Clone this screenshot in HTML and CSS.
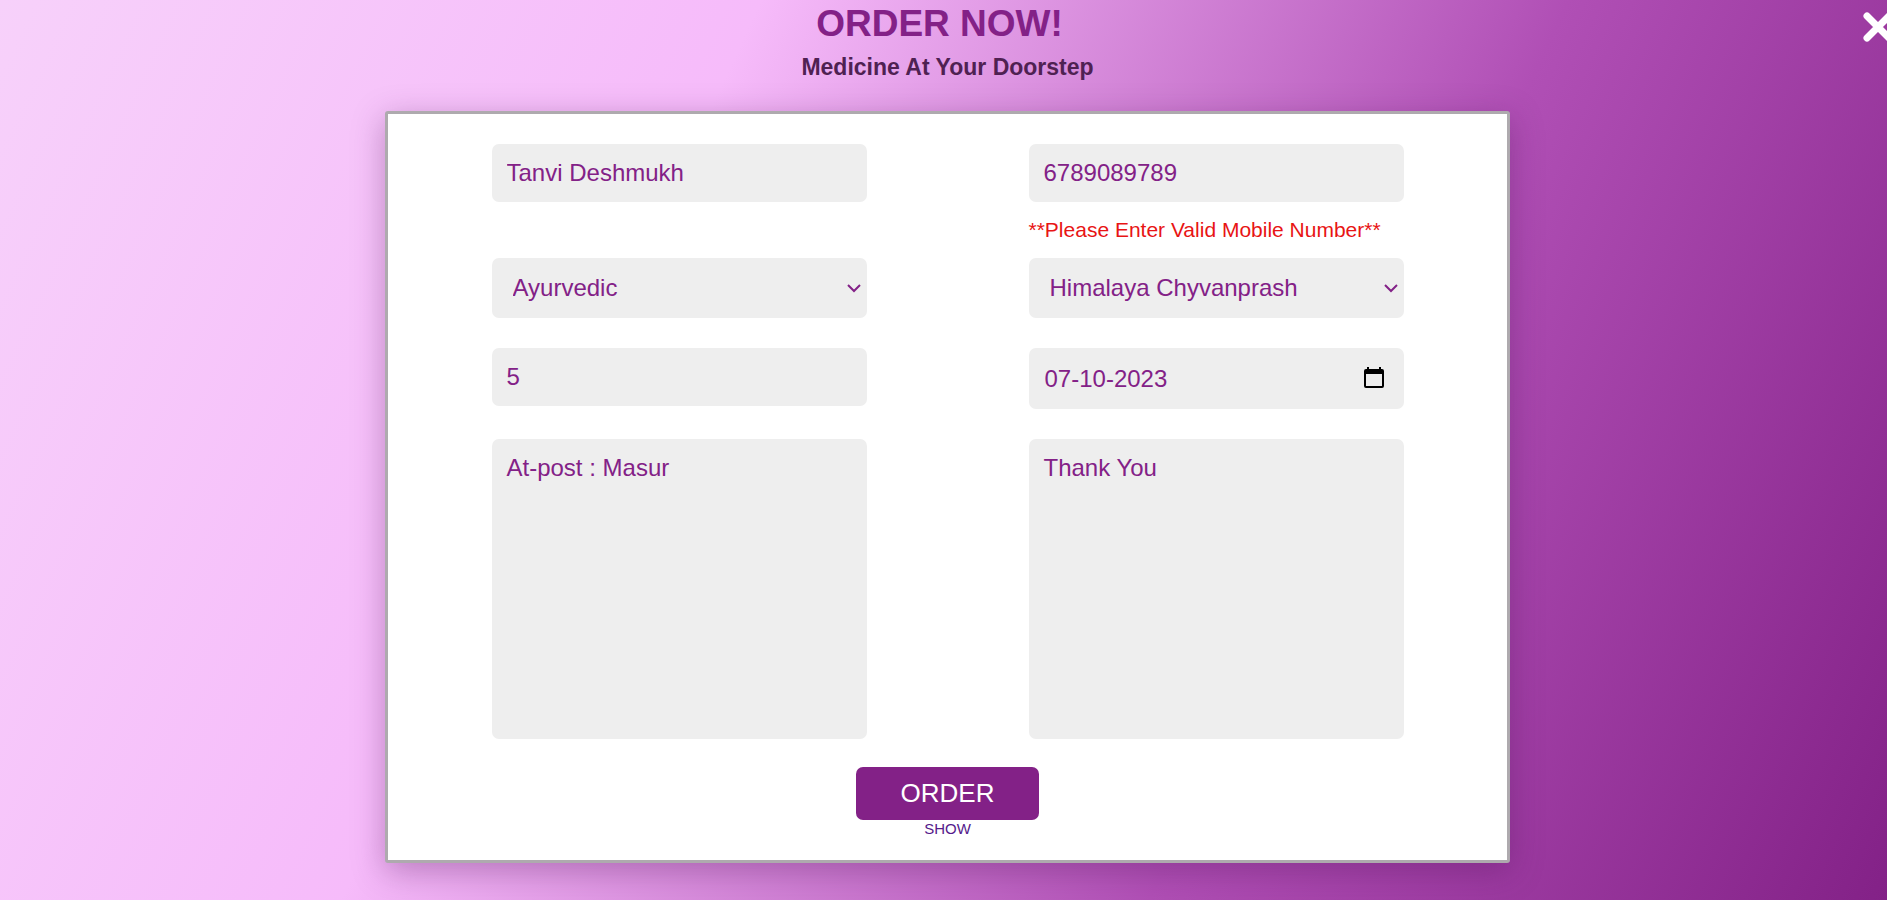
FILE: index.html
```html
<!DOCTYPE html>
<html lang="en">
<head>
<meta charset="utf-8">
<title>Order Now</title>
<meta name="viewport" content="width=device-width, initial-scale=1">
<link rel="stylesheet" href="styles.css">
</head>
<body>
<main class="page">
  <button class="close" type="button" aria-label="Close">
    <svg viewBox="0 0 30 30" width="30" height="30" aria-hidden="true"><path d="M4 4l22 22M26 4L4 26"/></svg>
  </button>
  <header class="heading">
    <h1 class="title">ORDER NOW!</h1>
    <p class="subtitle">Medicine At Your Doorstep</p>
  </header>
  <form class="card">
    <div class="fields">
      <input class="field" type="text" aria-label="Name" value="Tanvi Deshmukh">
      <div class="group">
        <input class="field" id="mobile" type="tel" aria-label="Mobile number" aria-describedby="mobile-error" value="6789089789">
        <p class="error" id="mobile-error">**Please Enter Valid Mobile Number**</p>
      </div>
      <div class="select-wrap">
        <select class="field select" aria-label="Medicine type"><option>Ayurvedic</option></select>
        <svg class="chevron" viewBox="0 0 14 10" width="14" height="10" aria-hidden="true"><path d="M1 2l6 6 6-6"/></svg>
      </div>
      <div class="select-wrap">
        <select class="field select" aria-label="Medicine"><option>Himalaya Chyvanprash</option></select>
        <svg class="chevron" viewBox="0 0 14 10" width="14" height="10" aria-hidden="true"><path d="M1 2l6 6 6-6"/></svg>
      </div>
      <input class="field" type="text" inputmode="numeric" aria-label="Quantity" value="5">
      <div class="field date">
        <input class="date-input" type="text" aria-label="Delivery date" value="07-10-2023">
        <button class="date-button" type="button" aria-label="Open calendar">
          <svg viewBox="0 0 20 22" width="20" height="22" aria-hidden="true"><path fill-rule="evenodd" d="M3 0h2v2h10V0h2v2h1a2 2 0 0 1 2 2v15a2 2 0 0 1-2 2H2a2 2 0 0 1-2-2V4a2 2 0 0 1 2-2h1zM2 7v12h16V7z"/></svg>
        </button>
      </div>
      <textarea class="field area" aria-label="Address">At-post : Masur</textarea>
      <textarea class="field area" aria-label="Message">Thank You</textarea>
    </div>
    <button class="order" type="submit">ORDER</button>
    <a class="show" href="#">SHOW</a>
  </form>
</main>
</body>
</html>
```
FILE: styles.css
```css
* {
  box-sizing: border-box;
}

body {
  margin: 0;
  font-family: "Liberation Sans", Arial, sans-serif;
  color: #832187;
}

.page {
  position: relative;
  min-height: 100vh;
  padding: 0 0 32px 8px;
  overflow: hidden;
  background: linear-gradient(115deg, #f7d1fa, #f6bbfa 33%, #b04fb5 68%, #832187);
}

.close {
  position: absolute;
  top: 12px;
  right: -6px;
  width: 30px;
  height: 30px;
  padding: 0;
  border: 0;
  background: none;
  cursor: pointer;
}

.close svg {
  display: block;
  fill: none;
  stroke: #fff;
  stroke-width: 7;
  stroke-linecap: round;
}

.heading {
  padding-top: 2px;
  text-align: center;
}

.title {
  margin: 0;
  padding-right: 16px;
  font-size: 37px;
  line-height: 44px;
}

.subtitle {
  margin: 8px 0 0;
  font-size: 23px;
  line-height: 26px;
  font-weight: bold;
  color: #4f2152;
}

.card {
  display: flex;
  flex-direction: column;
  align-items: center;
  width: 60%;
  max-width: 1125px;
  min-width: 720px;
  margin: 31px auto 0;
  padding: 30px 48px 22px;
  border: 3px solid #aeaaae;
  border-radius: 3px;
  background: #fff;
  box-shadow: 0 8px 32px rgba(80, 20, 90, 0.35);
}

.fields {
  display: grid;
  grid-template-columns: minmax(0, 375px) minmax(0, 375px);
  column-gap: 162px;
  row-gap: 30px;
  align-items: start;
  justify-content: center;
  width: 100%;
}

.field {
  display: block;
  width: 100%;
  height: 58px;
  margin: 0;
  padding: 0 15px;
  border: 0;
  border-radius: 7px;
  background: #eee;
  color: inherit;
  font-family: inherit;
  font-size: 24px;
  line-height: 28px;
}

.group {
  height: 84px;
}

.error {
  margin: 16px 0 0;
  font-size: 21px;
  line-height: 24px;
  color: #e81414;
  white-space: nowrap;
}

.select-wrap {
  position: relative;
}

.select {
  height: 60px;
  padding: 0 21px;
  appearance: none;
}

.chevron {
  position: absolute;
  top: 25px;
  right: 6px;
  fill: none;
  stroke: #832187;
  stroke-width: 2;
  pointer-events: none;
}

.date {
  display: flex;
  align-items: center;
  justify-content: space-between;
  height: 61px;
  padding: 0 20px 0 16px;
}

.date-input {
  flex: 1;
  min-width: 0;
  padding: 0;
  border: 0;
  background: none;
  color: inherit;
  font: inherit;
}

.date-button {
  padding: 0 0 2px;
  border: 0;
  background: none;
  cursor: pointer;
}

.date-button svg {
  display: block;
}

.area {
  height: 300px;
  padding: 15px;
  resize: none;
}

.order {
  width: 183px;
  height: 53px;
  margin-top: 28px;
  border: 0;
  border-radius: 7px;
  background: #832187;
  color: #fff;
  font-family: inherit;
  font-size: 26px;
  cursor: pointer;
}

.show {
  font-size: 15px;
  line-height: 18px;
  color: #551a8b;
  text-decoration: none;
}
```
